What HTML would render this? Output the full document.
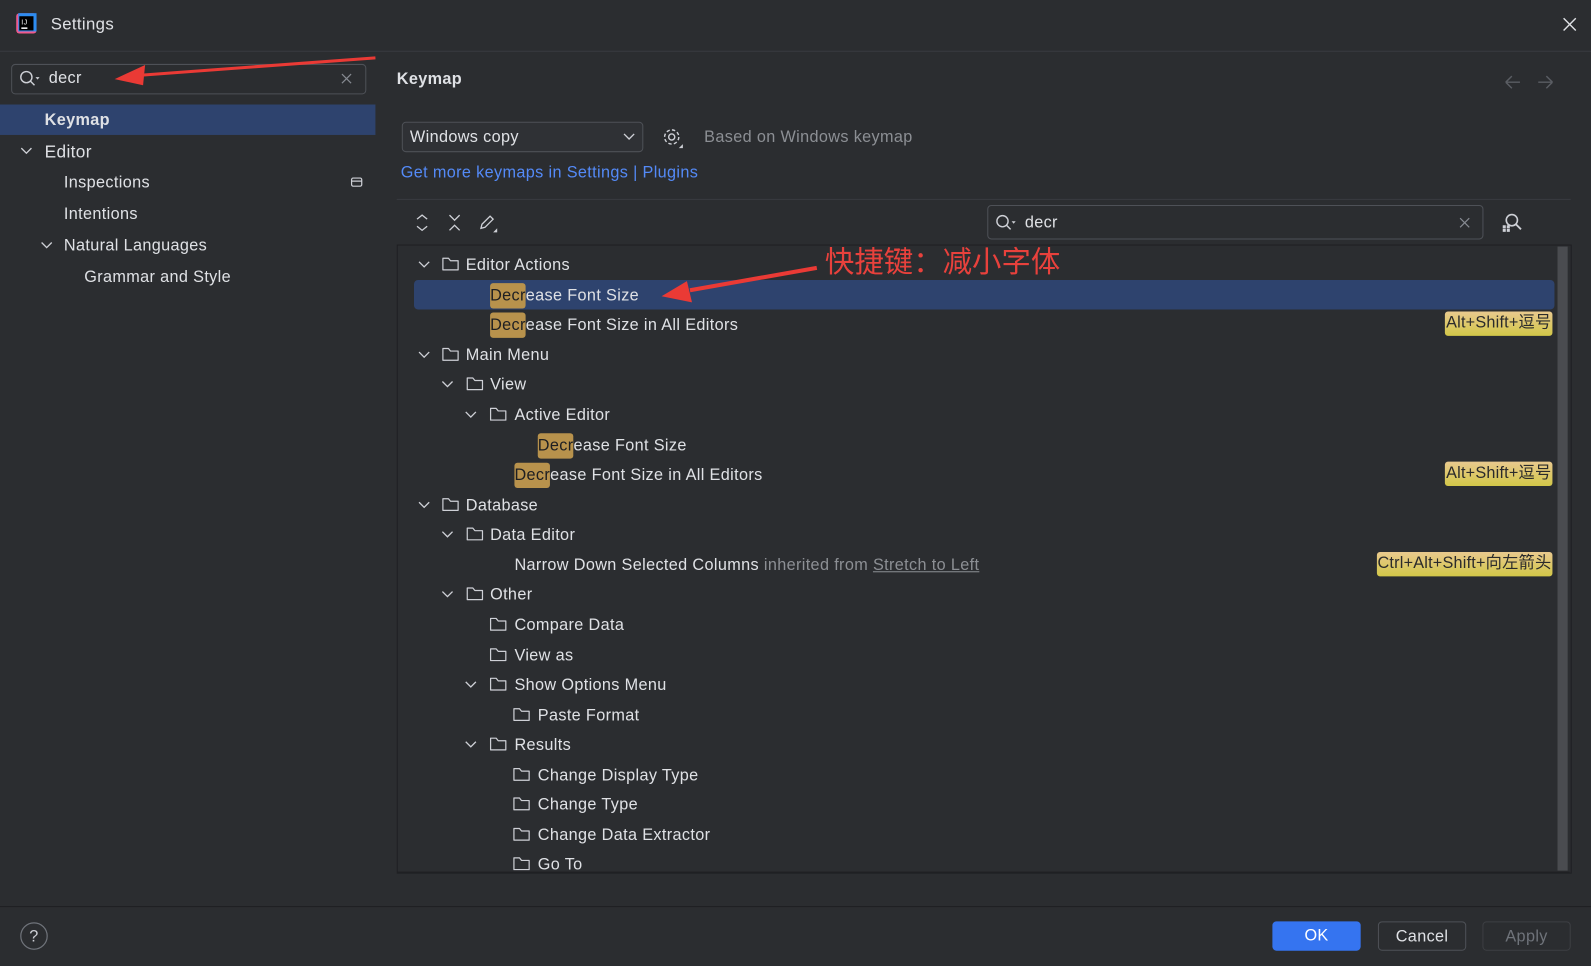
<!DOCTYPE html>
<html><head><meta charset="utf-8">
<style>
html,body{margin:0;padding:0;background:#2b2d30;overflow:hidden;width:1591px;height:966px}
#w{position:absolute;left:0;top:0;width:1568px;height:952px;transform:scale(1.01467);transform-origin:0 0;background:#2b2d30;font-family:"Liberation Sans","Noto Sans CJK SC",sans-serif;font-size:16px;letter-spacing:0.35px;color:#dfe1e5}
.a{position:absolute;white-space:nowrap}
.t{position:absolute;white-space:nowrap;line-height:20px;margin-top:1px}
.hl{background:#b8924c;color:#1e1f22;border-radius:3px;padding:4px 0}
.badge{position:absolute;right:38px;height:24px;line-height:24px;border-radius:3px;background:linear-gradient(#e9c98e,#d2c748);color:#2b2b2b;font-size:16px;letter-spacing:0.2px;padding:0 1px}
.btn{position:absolute;top:908px;height:29px;width:87px;border-radius:4px;text-align:center;line-height:29px;font-size:16px;box-sizing:border-box}
</style></head><body><div id="w">
<svg class="a" style="left:15px;top:12px" width="22" height="22" viewBox="0 0 22 22"><rect x="1" y="1" width="20" height="20" rx="3" fill="#f05a8c"/><rect x="3" y="1" width="18" height="18" fill="#2d8cf0"/><rect x="4" y="4" width="14" height="14" fill="#000"/><text x="6" y="12" font-size="7" fill="#fff" font-family="Liberation Sans">IJ</text><rect x="6" y="15" width="6" height="1.5" fill="#fff"/></svg>
<div class="t" style="left:50px;top:13px;font-size:16.5px">Settings</div>
<svg class="a" style="left:1539px;top:16px" width="16" height="16"><path d="M2 2L14 14M14 2L2 14" stroke="#dfe1e5" stroke-width="1.4"/></svg>
<div class="a" style="left:0;top:50px;width:1568px;height:1px;background:#393b40"></div>

<div class="a" style="left:11px;top:63px;width:348px;height:28px;border:1px solid #4e5157;border-radius:4px"></div>
<svg class="a" style="left:18px;top:68px" width="22" height="18"><circle cx="8" cy="8" r="5.5" stroke="#ced0d6" stroke-width="1.4" fill="none"/><path d="M12 12L16 16" stroke="#ced0d6" stroke-width="1.4"/><path d="M17 8l4 0l-2 2.5z" fill="#ced0d6"/></svg>
<div class="t" style="left:48px;top:67px">decr</div>
<svg class="a" style="left:336px;top:72px" width="11" height="11"><path d="M1 1L10 10M10 1L1 10" stroke="#868a91" stroke-width="1.2"/></svg>
<div class="a" style="left:0;top:103px;width:370px;height:30px;background:#2e436e"></div>
<div class="t" style="left:44px;top:108px;font-weight:bold">Keymap</div>
<svg class="a" style="left:20px;top:144px" width="12" height="10"><path d="M1 2L6 7L11 2" stroke="#ced0d6" stroke-width="1.3" fill="none"/></svg>
<div class="t" style="left:44px;top:139px;font-size:17px">Editor</div>
<div class="t" style="left:63px;top:170px">Inspections</div>
<svg class="a" style="left:345px;top:174px" width="14" height="12"><rect x="1.5" y="1.5" width="10" height="8" rx="1.5" stroke="#ced0d6" fill="none" stroke-width="1.2"/><path d="M1.5 4.5h10" stroke="#ced0d6" stroke-width="1.2"/></svg>
<div class="t" style="left:63px;top:201px">Intentions</div>
<svg class="a" style="left:40px;top:237px" width="12" height="10"><path d="M1 2L6 7L11 2" stroke="#ced0d6" stroke-width="1.3" fill="none"/></svg>
<div class="t" style="left:63px;top:232px">Natural Languages</div>
<div class="t" style="left:83px;top:263px">Grammar and Style</div>

<div class="t" style="left:391px;top:68px;font-weight:bold">Keymap</div>
<svg class="a" style="left:1482px;top:74px" width="50" height="14"><path d="M2 7H16M2 7L8 1M2 7L8 13" stroke="#5a5d63" stroke-width="1.4" fill="none"/><path d="M48 7H34M48 7L42 1M48 7L42 13" stroke="#5a5d63" stroke-width="1.4" fill="none"/></svg>
<div class="a" style="left:396px;top:120px;width:236px;height:28px;border:1px solid #4e5157;border-radius:4px;background:#2f3135"></div>
<div class="t" style="left:404px;top:125px">Windows copy</div>
<svg class="a" style="left:614px;top:130px" width="12" height="9"><path d="M1 2L6 7L11 2" stroke="#ced0d6" stroke-width="1.3" fill="none"/></svg>
<svg class="a" style="left:652px;top:125px" width="22" height="22"><circle cx="10" cy="10" r="3" stroke="#ced0d6" stroke-width="1.4" fill="none"/><circle cx="10" cy="10" r="7" stroke="#ced0d6" stroke-width="1.4" fill="none" stroke-dasharray="3.3 2.2"/><path d="M21 17v4h-4z" fill="#ced0d6"/></svg>
<div class="t" style="left:694px;top:125px;color:#8c8f94">Based on Windows keymap</div>
<div class="t" style="left:395px;top:160px;color:#548af7">Get more keymaps in Settings <span style="color:#548af7">|</span> Plugins</div>
<div class="a" style="left:391px;top:196px;width:1157px;height:1px;background:#393b40"></div>
<svg class="a" style="left:408px;top:210px" width="90" height="20"><path d="M3 6L8 2L13 6M3 13L8 17L13 13" stroke="#ced0d6" stroke-width="1.3" fill="none"/><path d="M35 2L40 7L45 2M35 17L40 12L45 17" stroke="#ced0d6" stroke-width="1.3" fill="none"/><path d="M66 15l1-4l8-8l3 3l-8 8z" stroke="#ced0d6" stroke-width="1.3" fill="none"/><path d="M82 15v4h-4z" fill="#ced0d6"/></svg>
<div class="a" style="left:973px;top:202px;width:487px;height:32px;border:1px solid #4e5157;border-radius:4px"></div>
<svg class="a" style="left:980px;top:210px" width="22" height="18"><circle cx="8" cy="8" r="5.5" stroke="#ced0d6" stroke-width="1.4" fill="none"/><path d="M12 12L16 16" stroke="#ced0d6" stroke-width="1.4"/><path d="M17 8l4 0l-2 2.5z" fill="#ced0d6"/></svg>
<div class="t" style="left:1010px;top:209px">decr</div>
<svg class="a" style="left:1438px;top:214px" width="11" height="11"><path d="M1 1L10 10M10 1L1 10" stroke="#868a91" stroke-width="1.2"/></svg>
<svg class="a" style="left:1479px;top:209px" width="22" height="20"><circle cx="11" cy="8" r="5.5" stroke="#ced0d6" stroke-width="1.6" fill="none"/><path d="M15 12L20 17" stroke="#ced0d6" stroke-width="1.8"/><rect x="2" y="13" width="3" height="3" fill="#ced0d6"/><rect x="6" y="13" width="3" height="3" fill="#ced0d6"/><rect x="2" y="16.5" width="3" height="3" fill="#ced0d6"/><rect x="6" y="16.5" width="3" height="3" fill="#ced0d6"/></svg>

<div class="a" style="left:391px;top:241px;width:1156px;height:618px;border:1px solid #1e1f22"></div>
<div class="a" style="left:1535px;top:243px;width:10px;height:615px;background:#4a4c50"></div>
<div class="a" style="left:408px;top:276px;width:1124px;height:29px;background:#2e436e;border-radius:4px"></div>

<svg width="0" height="0" style="position:absolute"><defs>
<g id="f"><path d="M1.5 3.5v10.5h15v-9h-7.5l-2-2.5h-5.5z" stroke="#ced0d6" stroke-width="1.2" fill="none" stroke-linejoin="round"/></g>
<g id="c"><path d="M1 2L6 7L11 2" stroke="#ced0d6" stroke-width="1.3" fill="none"/></g>
</defs></svg>

<svg class="a" style="left:412px;top:256px" width="12" height="10"><use href="#c"/></svg>
<svg class="a" style="left:435px;top:252px" width="18" height="16"><use href="#f"/></svg>
<div class="t" style="left:459px;top:251px">Editor Actions</div>
<div class="t" style="left:483px;top:281px"><span class="hl">Decr</span>ease Font Size</div>
<div class="t" style="left:483px;top:310px"><span class="hl">Decr</span>ease Font Size in All Editors</div>
<div class="badge" style="top:307px">Alt+Shift+逗号</div>

<svg class="a" style="left:412px;top:345px" width="12" height="10"><use href="#c"/></svg>
<svg class="a" style="left:435px;top:341px" width="18" height="16"><use href="#f"/></svg>
<div class="t" style="left:459px;top:340px">Main Menu</div>
<svg class="a" style="left:435px;top:374px" width="12" height="10"><use href="#c"/></svg>
<svg class="a" style="left:459px;top:370px" width="18" height="16"><use href="#f"/></svg>
<div class="t" style="left:483px;top:369px">View</div>
<svg class="a" style="left:458px;top:404px" width="12" height="10"><use href="#c"/></svg>
<svg class="a" style="left:482px;top:400px" width="18" height="16"><use href="#f"/></svg>
<div class="t" style="left:507px;top:399px">Active Editor</div>
<div class="t" style="left:530px;top:429px"><span class="hl">Decr</span>ease Font Size</div>
<div class="t" style="left:507px;top:458px"><span class="hl">Decr</span>ease Font Size in All Editors</div>
<div class="badge" style="top:455px">Alt+Shift+逗号</div>

<svg class="a" style="left:412px;top:493px" width="12" height="10"><use href="#c"/></svg>
<svg class="a" style="left:435px;top:489px" width="18" height="16"><use href="#f"/></svg>
<div class="t" style="left:459px;top:488px">Database</div>
<svg class="a" style="left:435px;top:522px" width="12" height="10"><use href="#c"/></svg>
<svg class="a" style="left:459px;top:518px" width="18" height="16"><use href="#f"/></svg>
<div class="t" style="left:483px;top:517px">Data Editor</div>
<div class="t" style="left:507px;top:547px">Narrow Down Selected Columns <span style="color:#8c8f94">inherited from <u>Stretch to Left</u></span></div>
<div class="badge" style="top:544px">Ctrl+Alt+Shift+向左箭头</div>
<svg class="a" style="left:435px;top:581px" width="12" height="10"><use href="#c"/></svg>
<svg class="a" style="left:459px;top:577px" width="18" height="16"><use href="#f"/></svg>
<div class="t" style="left:483px;top:576px">Other</div>
<svg class="a" style="left:482px;top:607px" width="18" height="16"><use href="#f"/></svg>
<div class="t" style="left:507px;top:606px">Compare Data</div>
<svg class="a" style="left:482px;top:637px" width="18" height="16"><use href="#f"/></svg>
<div class="t" style="left:507px;top:636px">View as</div>
<svg class="a" style="left:458px;top:670px" width="12" height="10"><use href="#c"/></svg>
<svg class="a" style="left:482px;top:666px" width="18" height="16"><use href="#f"/></svg>
<div class="t" style="left:507px;top:665px">Show Options Menu</div>
<svg class="a" style="left:505px;top:696px" width="18" height="16"><use href="#f"/></svg>
<div class="t" style="left:530px;top:695px">Paste Format</div>
<svg class="a" style="left:458px;top:729px" width="12" height="10"><use href="#c"/></svg>
<svg class="a" style="left:482px;top:725px" width="18" height="16"><use href="#f"/></svg>
<div class="t" style="left:507px;top:724px">Results</div>
<svg class="a" style="left:505px;top:755px" width="18" height="16"><use href="#f"/></svg>
<div class="t" style="left:530px;top:754px">Change Display Type</div>
<svg class="a" style="left:505px;top:784px" width="18" height="16"><use href="#f"/></svg>
<div class="t" style="left:530px;top:783px">Change Type</div>
<svg class="a" style="left:505px;top:814px" width="18" height="16"><use href="#f"/></svg>
<div class="t" style="left:530px;top:813px">Change Data Extractor</div>
<svg class="a" style="left:505px;top:843px" width="18" height="16"><use href="#f"/></svg>
<div class="t" style="left:530px;top:842px">Go To</div>
<div class="a" style="left:392px;top:859px;width:1155px;height:1px;background:#1e1f22"></div>

<div class="t" style="left:813px;top:238px;font-size:29px;line-height:34px;letter-spacing:0;color:#e8413c;font-family:'Noto Sans CJK SC',sans-serif">快捷键：减小字体</div>
<svg class="a" style="left:0;top:0" width="900" height="320">
<path d="M370 57L140 74" stroke="#ea3a35" stroke-width="3"/><path d="M113 78L143 64L141 84z" fill="#ea3a35"/>
<path d="M805 264L680 286" stroke="#ea3a35" stroke-width="4"/><path d="M652 292L677 277L682 298z" fill="#ea3a35"/>
</svg>

<div class="a" style="left:0;top:893px;width:1568px;height:1px;background:#1e1f22"></div>
<svg class="a" style="left:19px;top:908px" width="29" height="29"><circle cx="14.5" cy="14.5" r="13" stroke="#6f737a" stroke-width="1.2" fill="none"/><text x="14.5" y="20" text-anchor="middle" font-size="16" fill="#ced0d6" font-family="Liberation Sans">?</text></svg>
<div class="btn" style="left:1254px;background:#3574f0;color:#fff">OK</div>
<div class="btn" style="left:1358px;border:1px solid #4e5157;color:#dfe1e5">Cancel</div>
<div class="btn" style="left:1461px;border:1px solid #3d3f43;color:#6f737a">Apply</div>
</div></body></html>
